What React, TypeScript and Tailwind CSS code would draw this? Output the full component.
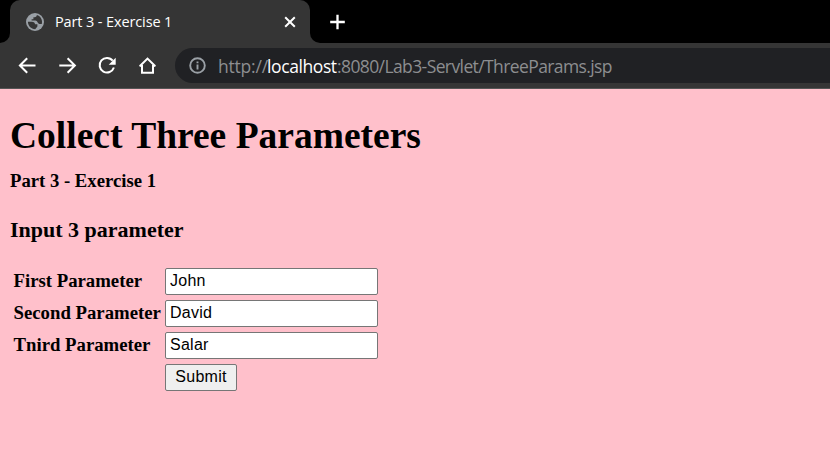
import React from 'react';

const rows = [
  { label: 'First Parameter', value: 'John' },
  { label: 'Second Parameter', value: 'David' },
  { label: 'Tnird Parameter', value: 'Salar' },
];

function Globe() {
  return (
    <svg className="h-[20px] w-[20px] shrink-0" viewBox="0 0 20 20">
      <circle cx="10" cy="10" r="9" fill="#9aa0a6" />
      <path
        fill="#353535"
        d="M2.900 9.800H6.800C9 9.800 10 10.800 10 12.300H12.400V14.500L10.200 17.200C6 17.200 2.900 13.800 2.900 9.800zM11.800 3.100C11.800 4.600 11 5.200 9.600 5.200H8.400V7.300H6.600V8.500H10.400C12.600 8.500 12.600 11.900 14.500 11.900H16.800C17.800 8.200 15.800 4.200 11.800 3.100z"
      />
    </svg>
  );
}

function TabStrip() {
  return (
    <div className="flex h-[43px] bg-black">
      <div className="flex w-[10px] bg-[#353535]">
        <div className="w-full rounded-br-[10px] bg-black" />
      </div>
      <div className="flex w-[300px] items-center rounded-t-[10px] bg-[#353535] pr-[13px] pl-[15px]">
        <Globe />
        <span className="ml-[10px] text-[14.5px] leading-5 tracking-[-0.12px] whitespace-nowrap text-white">
          Part 3 - Exercise 1
        </span>
        <svg className="ml-auto h-[14px] w-[14px]" viewBox="0 0 14 14" fill="none" stroke="#fff" strokeWidth="2">
          <path d="M2.2 2.2l9.6 9.6M11.8 2.2l-9.6 9.6" />
        </svg>
      </div>
      <div className="flex flex-1 bg-[#353535]">
        <div className="flex w-full items-center rounded-bl-[10px] bg-black pl-[19px]">
          <svg className="h-[16px] w-[16px]" viewBox="0 0 16 16" fill="none" stroke="#fff" strokeWidth="2.3">
            <path d="M8.5 .7v14.6M1.2 8h14.6" />
          </svg>
        </div>
      </div>
    </div>
  );
}

function Toolbar() {
  return (
    <div className="flex h-[46px] items-center border-b border-[#555] bg-[#353535] pl-[17px]">
      <svg className="h-[20px] w-[20px]" viewBox="0 0 20 20" fill="none" stroke="#fff" strokeWidth="2">
        <path d="M18.5 9.5H3.5M10.2 2.2L2.9 9.5l7.3 7.3" />
      </svg>
      <svg className="ml-[20px] h-[20px] w-[20px]" viewBox="0 0 20 20" fill="none" stroke="#fff" strokeWidth="2">
        <path d="M2.3 9.5h15M10.6 2.2l7.3 7.3-7.3 7.3" />
      </svg>
      <svg className="ml-[20px] h-[20px] w-[20px]" viewBox="0 0 20 20" fill="none" stroke="#fff" strokeWidth="2">
        <path d="M15.7 4.7A7.3 7.3 0 1 0 16.900 11.5" />
        <path d="M18.7 1.7v7h-7z" fill="#fff" stroke="none" />
      </svg>
      <svg className="ml-[20px] h-[20px] w-[20px]" viewBox="0 0 20 20" fill="none" stroke="#fff" strokeWidth="2">
        <path d="M5 9v7.7h11V9M2.7 10.2l7.8-7.6 7.8 7.6M2.6 9.7H5M16 9.7h2.4" />
      </svg>
      <div className="ml-[18px] flex h-[35px] flex-1 items-center rounded-l-[18px] bg-[#202124] pl-[14px]">
        <svg className="h-[17px] w-[17px]" viewBox="0 0 17 17" fill="none" stroke="#9aa0a6" strokeWidth="1.9">
          <circle cx="8.5" cy="8.5" r="7.3" />
          <path d="M8.5 7.6v4.8M8.5 4.5v1.8" />
        </svg>
        <div className="ml-[12px] flex text-[17.5px] leading-6 whitespace-nowrap text-[#8d8e90]">
          <span className="w-[49px] tracking-[-0.2px]">http://</span>
          <span className="w-[70px] tracking-[-0.4px] text-white">localhost</span>
          <span className="tracking-[-0.6px]">:8080/Lab3-Servlet/ThreeParams.jsp</span>
        </div>
      </div>
    </div>
  );
}

export default function App() {
  return (
    <div className="flex h-[476px] w-[830px] flex-col overflow-hidden bg-[#ffc0cb] font-['Open_Sans','Noto_Sans',sans-serif]">
      <TabStrip />
      <Toolbar />
      <main className="flex flex-col pl-[10px] font-['Liberation_Serif',serif] font-bold text-black">
        <h1 className="mt-[25px] text-[37.5px] leading-[44px]">Collect Three Parameters</h1>
        <h4 className="mt-[12px] text-[18.7px] leading-[22px]">Part 3 - Exercise 1</h4>
        <h3 className="mt-[25px] text-[22px] leading-[26px]">Input 3 parameter</h3>
        <form className="mt-[25px] flex flex-col gap-[5px]">
          {rows.map((row) => (
            <div key={row.label} className="flex h-[27px] items-start">
              <label className="mt-[2px] w-[155px] pl-[3.5px] text-[18.75px] leading-[22px] whitespace-nowrap">
                {row.label}
              </label>
              <input
                className="h-[27px] w-[213px] rounded-[2px] border border-[#767676] bg-white pb-[2px] pl-[4px] font-['Liberation_Sans',sans-serif] text-[16px] font-normal tracking-[0.25px] text-black"
                defaultValue={row.value}
              />
            </div>
          ))}
          <button
            type="button"
            className="ml-[155px] h-[27px] w-[72px] rounded-[2px] border border-[#767676] bg-[#efefef] pb-[2px] font-['Liberation_Sans',sans-serif] text-[16px] leading-[23px] font-normal tracking-[0.25px]"
          >
            Submit
          </button>
        </form>
      </main>
    </div>
  );
}
